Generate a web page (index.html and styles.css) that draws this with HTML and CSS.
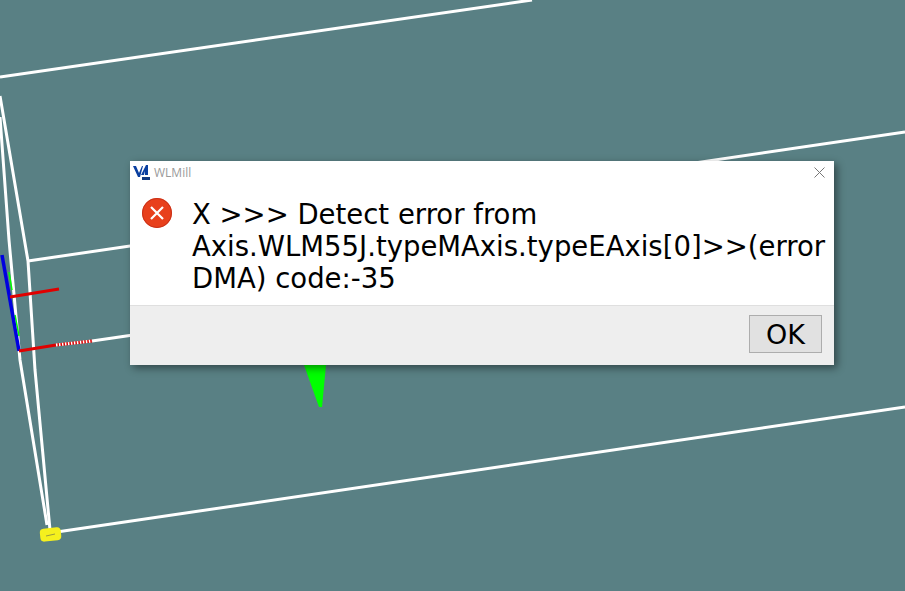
FILE: index.html
```html
<!DOCTYPE html>
<html lang="en">
<head>
    <meta charset="UTF-8">
    <meta name="viewport" content="width=device-width, initial-scale=1.0">
    <title>WLMill</title>
    <link rel="stylesheet" href="styles.css">
</head>
<body>

    <!-- 3D view behind the dialog -->
    <svg class="scene" width="905" height="591" viewBox="0 0 905 591">
        <g stroke="#fff" stroke-width="3" fill="none">
            <line x1="0" y1="77" x2="532" y2="0"/>
            <line x1="28" y1="261" x2="905" y2="132"/>
            <line x1="92" y1="341" x2="140" y2="334"/>
            <line x1="50" y1="533" x2="905" y2="407"/>
            <polyline points="0,96 28,261 35,370 50,530"/>
            <polyline points="0,117 9,240 20,360 47,525"/>
        </g>
        <g stroke="#0f0" stroke-width="1.5">
            <line x1="9" y1="272" x2="12" y2="290"/>
            <line x1="15" y1="315" x2="19" y2="336"/>
        </g>
        <polygon points="304,365 326,365 322,407 319,407" fill="#0f0"/>
        <line x1="2" y1="255" x2="19" y2="351" stroke="#0000e0" stroke-width="3.5"/>
        <g stroke="#e00000" stroke-width="3">
            <line x1="10" y1="297" x2="59" y2="289"/>
            <line x1="19" y1="351" x2="56" y2="345"/>
        </g>
        <line x1="56" y1="345" x2="92" y2="341" stroke="#e00000" stroke-width="3"/>
        <line x1="56" y1="345" x2="92" y2="341" stroke="#fff" stroke-width="3" stroke-dasharray="1.5 1.5"/>
        <rect x="40" y="528" width="21" height="13" rx="4" fill="#f5f01e" transform="rotate(-6 50 534)"/>
        <line x1="46" y1="536" x2="55" y2="534" stroke="#9a9a40" stroke-width="1"/>
    </svg>

    <div class="dialog">
        <div class="title-bar">
            <svg class="app-icon" width="17" height="17" viewBox="0 0 17 17">
                <polygon points="0,2 3,2 6,9 9,2 10,2 7,13 5,13" fill="#0a3fa0"/>
                <polygon points="8,11 13,1 15,1 15,11 12,11 12,7 11,11" fill="#0a3fa0"/>
                <rect x="9" y="13" width="8" height="3" fill="#123a80"/>
            </svg>
            <span class="title-text">WLMill</span>
            <svg class="close-icon" width="11" height="11" viewBox="0 0 11 11">
                <path d="M0.5 0.5L10.5 10.5M10.5 0.5L0.5 10.5" stroke="#777" stroke-width="1" fill="none"/>
            </svg>
        </div>
        <div class="dialog-body">
            <svg class="error-icon" width="30" height="30" viewBox="0 0 30 30">
                <circle cx="15" cy="15" r="15" fill="#e8401c"/>
                <circle cx="15" cy="15" r="14.5" fill="none" stroke="#c8321a" stroke-width="1"/>
                <path d="M9 9L21 21M21 9L9 21" stroke="#fff" stroke-width="2.2" fill="none"/>
            </svg>
            <p class="message">X &gt;&gt;&gt; Detect error from Axis.WLM55J.typeMAxis.typeEAxis[0]&gt;&gt;(error DMA) code:-35</p>
        </div>
        <div class="dialog-footer">
            <button class="ok-button">OK</button>
        </div>
    </div>

</body>
</html>
```

FILE: styles.css
```css
body {
    margin: 0;
    padding: 0;
    width: 905px;
    height: 591px;
    overflow: hidden;
    position: relative;
    background-color: #598084;
    font-family: "DejaVu Sans", sans-serif;
}

.scene {
    position: absolute;
    left: 0;
    top: 0;
}

.dialog {
    position: absolute;
    left: 130px;
    top: 161px;
    width: 704px;
    background: #fff;
    box-shadow: 3px 3px 8px rgba(0, 0, 0, 0.45);
}

.title-bar {
    height: 23px;
    display: flex;
    align-items: center;
    padding: 0 9px 0 3px;
}

.app-icon {
    margin-right: 4px;
}

.title-text {
    flex: 1;
    font-family: "Open Sans", sans-serif;
    font-size: 12px;
    color: #9a9a9a;
}

.dialog-body {
    height: 121px;
    display: flex;
    align-items: flex-start;
    padding-left: 12px;
    box-sizing: border-box;
}

.error-icon {
    margin-top: 14px;
    margin-right: 20px;
    flex-shrink: 0;
}

.message {
    margin: 14px 0 0;
    width: 636px;
    font-size: 27.5px;
    line-height: 32px;
    color: #000;
}

.dialog-footer {
    height: 60px;
    background: #eeeeee;
    border-top: 1px solid #dfdfdf;
    box-sizing: border-box;
    display: flex;
    justify-content: flex-end;
    align-items: flex-start;
    padding: 9px 12px 0 0;
}

.ok-button {
    width: 73px;
    height: 38px;
    padding: 0;
    background: #e1e1e1;
    border: 1px solid #adadad;
    font-family: "DejaVu Sans", sans-serif;
    font-size: 27px;
    color: #000;
}
```
